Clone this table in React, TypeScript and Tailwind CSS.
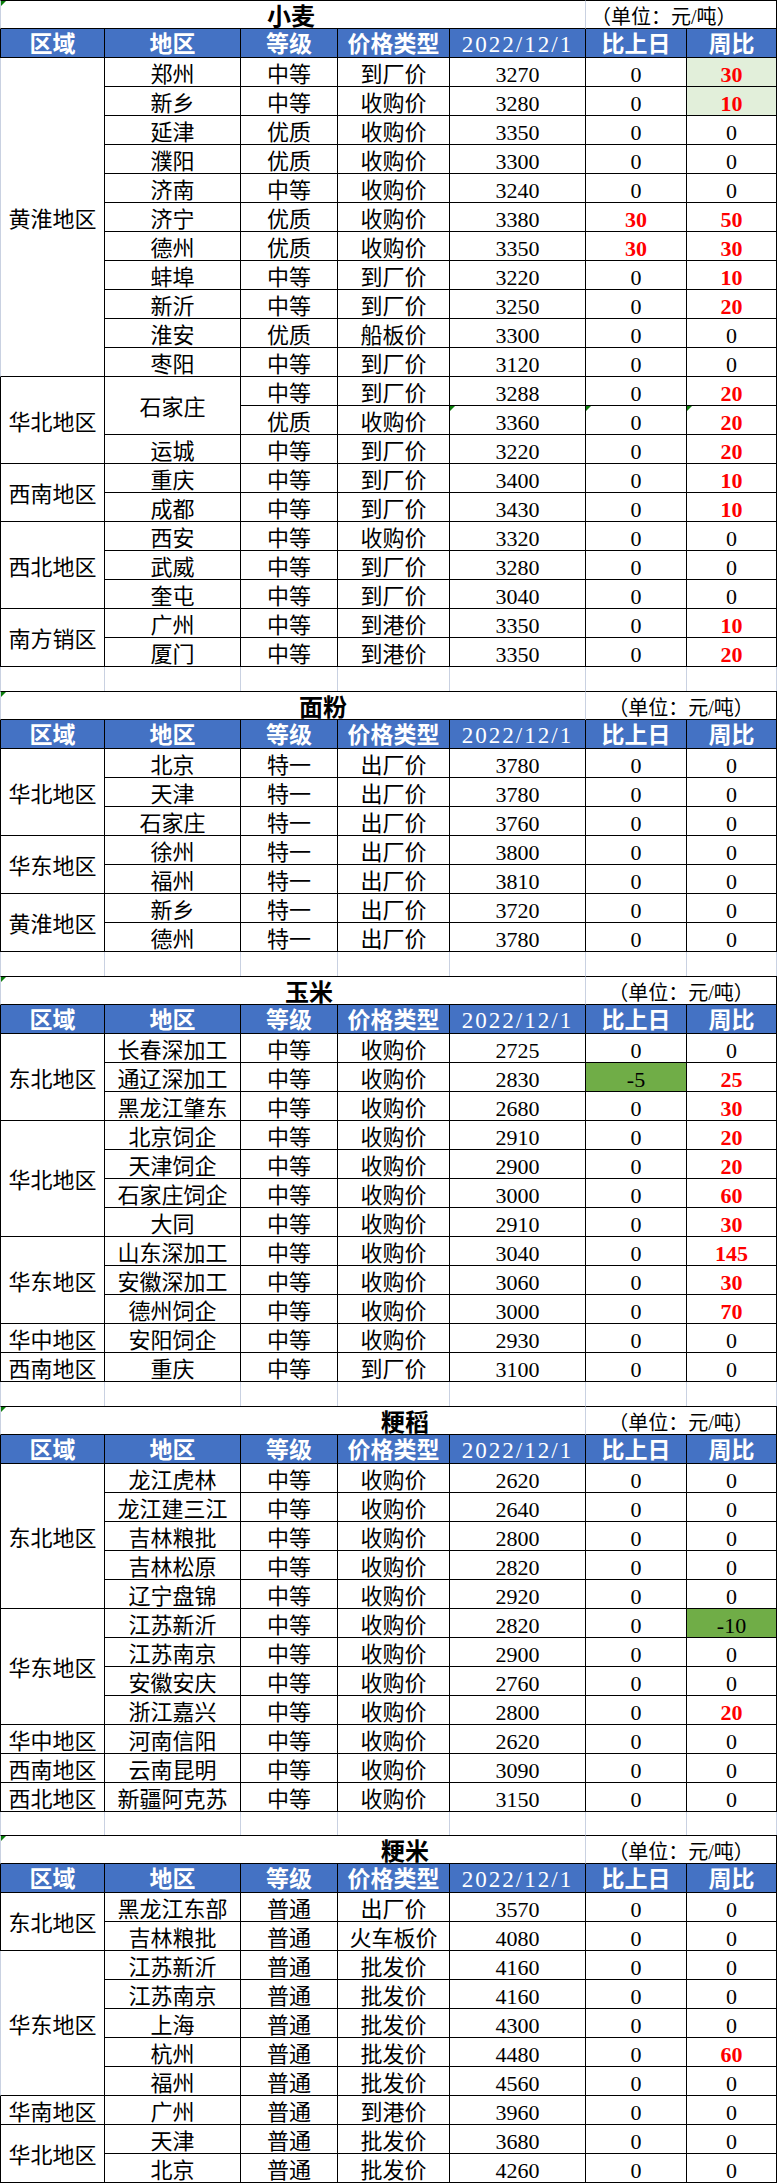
import React from 'react';

type C = { v: string; red?: boolean; bg?: 'lt' | 'gr' };
type R = { sub?: string; subSpan?: number; skipSub?: boolean; g: string; t: string; p: string; d: C; w: C; tri?: boolean };
type Reg = { name: string; light?: boolean; rows: R[] };
type Sec = { title: string; titleCls: string; unitCls: string; gapCls: string; regions: Reg[] };

const z: C = { v: '0' };
const rd = (v: string): C => ({ v, red: true });
const row = (sub: string, g: string, t: string, p: string, d: C = z, w: C = z): R => ({ sub, g, t, p, d, w });

const sections: Sec[] = [
  {
    title: '小麦',
    titleCls: 'pl-[266px]',
    unitCls: 'justify-start pl-[5px]',
    gapCls: 'h-[24px]',
    regions: [
      {
        name: '黄淮地区',
        light: true,
        rows: [
          row('郑州', '中等', '到厂价', '3270', z, { v: '30', red: true, bg: 'lt' }),
          row('新乡', '中等', '收购价', '3280', z, { v: '10', red: true, bg: 'lt' }),
          row('延津', '优质', '收购价', '3350'),
          row('濮阳', '优质', '收购价', '3300'),
          row('济南', '中等', '收购价', '3240'),
          row('济宁', '优质', '收购价', '3380', rd('30'), rd('50')),
          row('德州', '优质', '收购价', '3350', rd('30'), rd('30')),
          row('蚌埠', '中等', '到厂价', '3220', z, rd('10')),
          row('新沂', '中等', '到厂价', '3250', z, rd('20')),
          row('淮安', '优质', '船板价', '3300'),
          row('枣阳', '中等', '到厂价', '3120'),
        ],
      },
      {
        name: '华北地区',
        rows: [
          { sub: '石家庄', subSpan: 2, g: '中等', t: '到厂价', p: '3288', d: z, w: rd('20') },
          { skipSub: true, g: '优质', t: '收购价', p: '3360', d: z, w: rd('20'), tri: true },
          row('运城', '中等', '到厂价', '3220', z, rd('20')),
        ],
      },
      {
        name: '西南地区',
        rows: [row('重庆', '中等', '到厂价', '3400', z, rd('10')), row('成都', '中等', '到厂价', '3430', z, rd('10'))],
      },
      {
        name: '西北地区',
        rows: [row('西安', '中等', '收购价', '3320'), row('武威', '中等', '到厂价', '3280'), row('奎屯', '中等', '到厂价', '3040')],
      },
      {
        name: '南方销区',
        rows: [row('广州', '中等', '到港价', '3350', z, rd('10')), row('厦门', '中等', '到港价', '3350', z, rd('20'))],
      },
    ],
  },
  {
    title: '面粉',
    titleCls: 'pl-[298px]',
    unitCls: 'justify-center',
    gapCls: 'h-[24px]',
    regions: [
      {
        name: '华北地区',
        rows: [row('北京', '特一', '出厂价', '3780'), row('天津', '特一', '出厂价', '3780'), row('石家庄', '特一', '出厂价', '3760')],
      },
      { name: '华东地区', rows: [row('徐州', '特一', '出厂价', '3800'), row('福州', '特一', '出厂价', '3810')] },
      { name: '黄淮地区', rows: [row('新乡', '特一', '出厂价', '3720'), row('德州', '特一', '出厂价', '3780')] },
    ],
  },
  {
    title: '玉米',
    titleCls: 'pl-[284px]',
    unitCls: 'justify-center',
    gapCls: 'h-[24px]',
    regions: [
      {
        name: '东北地区',
        rows: [
          row('长春深加工', '中等', '收购价', '2725'),
          row('通辽深加工', '中等', '收购价', '2830', { v: '-5', bg: 'gr' }, rd('25')),
          row('黑龙江肇东', '中等', '收购价', '2680', z, rd('30')),
        ],
      },
      {
        name: '华北地区',
        rows: [
          row('北京饲企', '中等', '收购价', '2910', z, rd('20')),
          row('天津饲企', '中等', '收购价', '2900', z, rd('20')),
          row('石家庄饲企', '中等', '收购价', '3000', z, rd('60')),
          row('大同', '中等', '收购价', '2910', z, rd('30')),
        ],
      },
      {
        name: '华东地区',
        rows: [
          row('山东深加工', '中等', '收购价', '3040', z, rd('145')),
          row('安徽深加工', '中等', '收购价', '3060', z, rd('30')),
          row('德州饲企', '中等', '收购价', '3000', z, rd('70')),
        ],
      },
      { name: '华中地区', rows: [row('安阳饲企', '中等', '收购价', '2930')] },
      { name: '西南地区', rows: [row('重庆', '中等', '到厂价', '3100')] },
    ],
  },
  {
    title: '粳稻',
    titleCls: 'pl-[380px]',
    unitCls: 'justify-center',
    gapCls: 'h-[23px]',
    regions: [
      {
        name: '东北地区',
        rows: [
          row('龙江虎林', '中等', '收购价', '2620'),
          row('龙江建三江', '中等', '收购价', '2640'),
          row('吉林粮批', '中等', '收购价', '2800'),
          row('吉林松原', '中等', '收购价', '2820'),
          row('辽宁盘锦', '中等', '收购价', '2920'),
        ],
      },
      {
        name: '华东地区',
        rows: [
          row('江苏新沂', '中等', '收购价', '2820', z, { v: '-10', bg: 'gr' }),
          row('江苏南京', '中等', '收购价', '2900'),
          row('安徽安庆', '中等', '收购价', '2760'),
          row('浙江嘉兴', '中等', '收购价', '2800', z, rd('20')),
        ],
      },
      { name: '华中地区', rows: [row('河南信阳', '中等', '收购价', '2620')] },
      { name: '西南地区', rows: [row('云南昆明', '中等', '收购价', '3090')] },
      { name: '西北地区', rows: [row('新疆阿克苏', '中等', '收购价', '3150')] },
    ],
  },
  {
    title: '粳米',
    titleCls: 'pl-[380px]',
    unitCls: 'justify-center',
    gapCls: 'h-0',
    regions: [
      { name: '东北地区', rows: [row('黑龙江东部', '普通', '出厂价', '3570'), row('吉林粮批', '普通', '火车板价', '4080')] },
      {
        name: '华东地区',
        light: true,
        rows: [
          row('江苏新沂', '普通', '批发价', '4160'),
          row('江苏南京', '普通', '批发价', '4160'),
          row('上海', '普通', '批发价', '4300'),
          row('杭州', '普通', '批发价', '4480', z, rd('60')),
          row('福州', '普通', '批发价', '4560'),
        ],
      },
      { name: '华南地区', rows: [row('广州', '普通', '到港价', '3960')] },
      { name: '华北地区', rows: [row('天津', '普通', '批发价', '3680'), row('北京', '普通', '批发价', '4260')] },
    ],
  },
];

const spanCls: Record<number, string> = {
  1: 'row-span-1',
  2: 'row-span-2',
  3: 'row-span-3',
  4: 'row-span-4',
  5: 'row-span-5',
  11: 'row-span-11',
};

const cellBase =
  'relative flex items-center justify-center border-r border-b border-black pt-[5px] text-[22px] leading-[20px] text-black whitespace-nowrap overflow-hidden';
const headCls =
  'flex items-center justify-center border-r border-b border-black bg-[#4472c4] pt-[4px] text-[23px] leading-[20px] font-bold text-white whitespace-nowrap overflow-hidden';
const GRID = 'grid grid-cols-[105px_136px_97px_112px_136px_101px_90px] auto-rows-[29px]';

function Tri() {
  return <span className="absolute left-0 top-0 z-10 h-0 w-0 border-t-[5px] border-r-[5px] border-t-[#0b7d0b] border-r-transparent" />;
}

function Val({ c, tri }: { c: C; tri?: boolean }) {
  const bg = c.bg === 'lt' ? 'bg-[#e2efda]' : c.bg === 'gr' ? 'bg-[#70ad47]' : '';
  const txt = c.red ? 'text-[#ff0000] font-bold' : '';
  return (
    <div className={`${cellBase} ${bg}`}>
      {tri && <Tri />}
      <span className={txt}>{c.v}</span>
    </div>
  );
}

function Section({ s }: { s: Sec }) {
  return (
    <>
      <div className={GRID}>
        <div
          className={`relative col-span-5 flex items-center border-t border-r border-b border-l border-t-black border-b-black border-l-[#c9d1e1] border-r-[#c9d1e1] pt-[4px] text-[24px] leading-[22px] font-bold text-black whitespace-nowrap ${s.titleCls}`}
        >
          <Tri />
          {s.title}
        </div>
        <div
          className={`col-span-2 flex items-center border-t border-r border-b border-black pt-[5px] text-[20px] leading-[20px] text-black whitespace-nowrap ${s.unitCls}`}
        >
          （单位：元/吨）
        </div>
        <div className={`${headCls} border-l`}>区域</div>
        <div className={headCls}>地区</div>
        <div className={headCls}>等级</div>
        <div className={headCls}>价格类型</div>
        <div className={`${headCls} !font-normal tracking-[2px]`}>2022/12/1</div>
        <div className={headCls}>比上日</div>
        <div className={headCls}>周比</div>
        {s.regions.map((reg, ri) =>
          reg.rows.map((r, i) => (
            <React.Fragment key={`${ri}-${i}`}>
              {i === 0 && (
                <div className={`${cellBase} ${spanCls[reg.rows.length]} border-l ${reg.light ? 'border-l-[#c9d1e1]' : 'border-l-black'}`}>
                  {reg.name}
                </div>
              )}
              {!r.skipSub && <div className={`${cellBase} ${spanCls[r.subSpan ?? 1]}`}>{r.sub}</div>}
              <div className={cellBase}>{r.g}</div>
              <div className={cellBase}>{r.t}</div>
              <div className={cellBase}>
                {r.tri && <Tri />}
                {r.p}
              </div>
              <Val c={r.d} tri={r.tri} />
              <Val c={r.w} tri={r.tri} />
            </React.Fragment>
          ))
        )}
      </div>
      <div className={`grid grid-cols-[105px_136px_97px_112px_136px_101px_90px] ${s.gapCls}`}>
        <div className="border-r border-l border-[#c9d1e1]" />
        <div className="border-r border-[#c9d1e1]" />
        <div className="border-r border-[#c9d1e1]" />
        <div className="border-r border-[#c9d1e1]" />
        <div className="border-r border-[#c9d1e1]" />
        <div className="border-r border-[#c9d1e1]" />
        <div className="border-r border-[#c9d1e1]" />
      </div>
    </>
  );
}

export default function App() {
  return (
    <div className="flex w-[777px] flex-col bg-white font-['Liberation_Serif','Noto_Sans_CJK_SC',serif]">
      {sections.map((s) => (
        <Section key={s.title} s={s} />
      ))}
    </div>
  );
}
